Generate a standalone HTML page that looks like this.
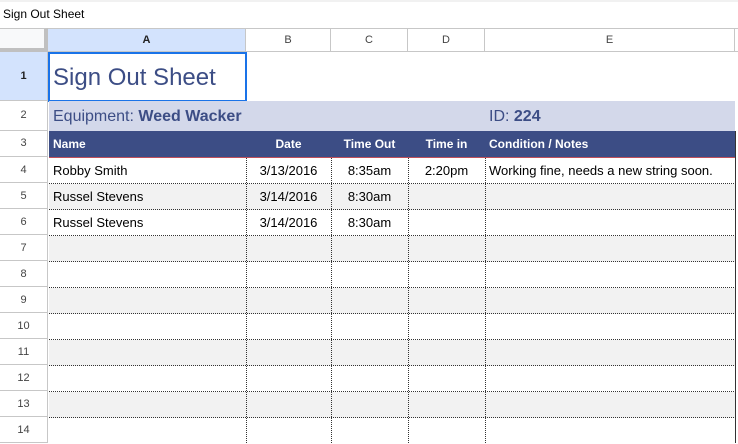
<!DOCTYPE html>
<html><head><style>
*{margin:0;padding:0;box-sizing:border-box}
body{width:738px;height:443px;overflow:hidden;background:#fff;font-family:"Liberation Sans",Arial,sans-serif;position:relative}
div{position:absolute}
.t{font-size:12px;color:#000;top:7px;left:3px}
.ch{top:28px;height:24px;border-right:1px solid #c7c7c7;border-bottom:1px solid #c7c7c7;border-top:1px solid #c7c7c7;font-size:11px;color:#444;text-align:center;line-height:22px}
.rh{left:0;width:48px;border-right:1px solid #c7c7c7;border-bottom:1px solid #c7c7c7;font-size:11px;color:#444;text-align:center}
.c{font-size:13px;color:#000;white-space:nowrap;overflow:hidden;line-height:27px;padding:0 4px}
.hd{color:#fff;font-weight:bold;font-size:12px;line-height:26px}
</style></head><body>
<div class="t">Sign Out Sheet</div>
<div style="left:0;top:0;width:738px;height:2px;background:#f1f1f1"></div>
<div style="left:0;top:28px;width:48px;height:24px;background:#f8f9fa;border-right:4px solid #c0c0c0;border-bottom:4px solid #c0c0c0;border-top:1px solid #c7c7c7"></div>
<div class="ch" style="left:48px;width:198px;background:#d3e3fd;font-weight:bold;color:#222">A</div>
<div class="ch" style="left:246px;width:85px">B</div>
<div class="ch" style="left:331px;width:77px">C</div>
<div class="ch" style="left:408px;width:77px">D</div>
<div class="ch" style="left:485px;width:250px">E</div>
<div class="ch" style="left:735px;width:3px;border-right:none"></div>
<div class="rh" style="top:52px;height:49px;line-height:48px;background:#d3e3fd;font-weight:bold;color:#222">1</div>
<div class="rh" style="top:101px;height:30px;line-height:29px">2</div>
<div class="rh" style="top:131px;height:26px;line-height:25px">3</div>
<div class="rh" style="top:157px;height:26px;line-height:27px">4</div>
<div class="rh" style="top:183px;height:26px;line-height:27px">5</div>
<div class="rh" style="top:209px;height:26px;line-height:27px">6</div>
<div class="rh" style="top:235px;height:26px;line-height:27px">7</div>
<div class="rh" style="top:261px;height:26px;line-height:27px">8</div>
<div class="rh" style="top:287px;height:26px;line-height:27px">9</div>
<div class="rh" style="top:313px;height:26px;line-height:27px">10</div>
<div class="rh" style="top:339px;height:26px;line-height:27px">11</div>
<div class="rh" style="top:365px;height:26px;line-height:27px">12</div>
<div class="rh" style="top:391px;height:26px;line-height:27px">13</div>
<div class="rh" style="top:417px;height:26px;line-height:27px">14</div>
<div style="left:48px;top:52px;width:199px;height:50px;border:2px solid #1a73e8"></div>
<div style="left:53px;top:64px;font-size:24px;color:#3c4d85">Sign Out Sheet</div>
<div style="left:49px;top:101px;width:686px;height:30px;background:#d3d8ea"></div>
<div style="left:53px;top:108px;font-size:16px;color:#3c4d85">Equipment: <b>Weed Wacker</b></div>
<div style="left:489px;top:108px;font-size:16px;color:#3c4d85">ID: <b>224</b></div>
<div style="left:49px;top:131px;width:687px;height:27px;background:#3c4d85;border-bottom:1px solid #c0505a;border-right:1px solid #c0505a"></div>
<div class="hd" style="left:53px;top:131px">Name</div>
<div class="hd" style="left:246px;width:85px;text-align:center;top:131px">Date</div>
<div class="hd" style="left:331px;width:77px;text-align:center;top:131px">Time Out</div>
<div class="hd" style="left:408px;width:77px;text-align:center;top:131px">Time in</div>
<div class="hd" style="left:489px;top:131px">Condition / Notes</div>
<div style="left:49px;top:184px;width:686px;height:26px;background:#f2f2f2"></div>
<div style="left:49px;top:236px;width:686px;height:26px;background:#f2f2f2"></div>
<div style="left:49px;top:288px;width:686px;height:26px;background:#f2f2f2"></div>
<div style="left:49px;top:340px;width:686px;height:26px;background:#f2f2f2"></div>
<div style="left:49px;top:392px;width:686px;height:26px;background:#f2f2f2"></div>
<svg style="position:absolute;left:0;top:0" width="738" height="443">
<g stroke="#333" stroke-width="1" stroke-dasharray="1,1">
<path d="M49 183.5H735M49 209.5H735M49 235.5H735M49 261.5H735M49 287.5H735M49 313.5H735M49 339.5H735M49 365.5H735M49 391.5H735M49 417.5H735"/>
<path d="M246.5 158V443M331.5 158V443M408.5 158V443M485.5 158V443"/>
</g>
<path d="M735.5 131V443" stroke="#333" stroke-width="1"/>
</svg>
<div class="c" style="left:49px;top:157px">Robby Smith</div>
<div class="c" style="left:246px;width:85px;text-align:center;top:157px">3/13/2016</div>
<div class="c" style="left:331px;width:77px;text-align:center;top:157px">8:35am</div>
<div class="c" style="left:408px;width:77px;text-align:center;top:157px">2:20pm</div>
<div class="c" style="left:485px;top:157px">Working fine, needs a new string soon.</div>
<div class="c" style="left:49px;top:183px">Russel Stevens</div>
<div class="c" style="left:246px;width:85px;text-align:center;top:183px">3/14/2016</div>
<div class="c" style="left:331px;width:77px;text-align:center;top:183px">8:30am</div>
<div class="c" style="left:49px;top:209px">Russel Stevens</div>
<div class="c" style="left:246px;width:85px;text-align:center;top:209px">3/14/2016</div>
<div class="c" style="left:331px;width:77px;text-align:center;top:209px">8:30am</div>
</body></html>
